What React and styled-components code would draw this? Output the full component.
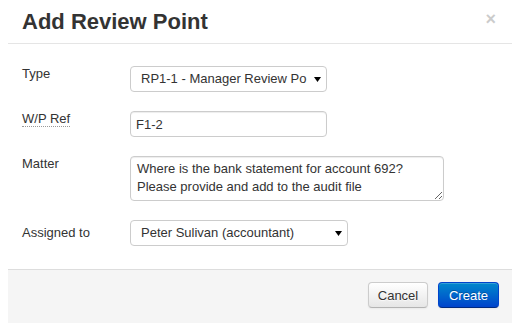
import React from "react";
import styled, { createGlobalStyle } from "styled-components";

const Global = createGlobalStyle`
  html, body { margin: 0; padding: 0; background: #fff; }
  body { font-family: "Liberation Sans", Arial, sans-serif; font-size: 13px; color: #333; }
`;

const Modal = styled.div`
  margin-left: 8px;
  width: 504px;
  height: 323px;
  background: #fff;
  display: flex;
  flex-direction: column;
`;

const Header = styled.div`
  height: 43px;
  border-bottom: 1px solid #e5e5e5;
  display: flex;
  align-items: center;
  justify-content: space-between;
  padding: 0 14px;
`;

const Title = styled.h3`
  margin: 0;
  font-size: 22px;
  font-weight: bold;
  color: #333;
  line-height: 26px;
`;

const Close = styled.span`
  font-size: 18px;
  font-weight: bold;
  color: #000;
  opacity: 0.2;
  line-height: 18px;
  margin-top: -5px;
  margin-right: 2px;
`;

const Body = styled.div`
  flex: 1;
  padding: 22px 14px 0 14px;
  display: flex;
  flex-direction: column;
  gap: 19px;
`;

const Row = styled.div`
  display: flex;
  align-items: flex-start;
`;

const Label = styled.label`
  width: 108px;
  flex: none;
  line-height: 16px;
  padding-top: ${(p) => p.$top || 0}px;
  color: #333;
`;

const Abbr = styled.abbr`
  text-decoration: none;
  border-bottom: 1px dotted #999;
  cursor: help;
`;

const SelectBox = styled.div`
  box-sizing: border-box;
  width: ${(p) => p.$w}px;
  height: 26px;
  border: 1px solid #ccc;
  border-radius: 4px;
  background: #fff;
  display: flex;
  align-items: center;
  padding: 0 5px 0 10px;
  gap: 6px;
`;

const SelectText = styled.span`
  flex: 1;
  min-width: 0;
  white-space: nowrap;
  overflow: hidden;
  line-height: 20px;
  color: #333;
`;

const Input = styled.input`
  box-sizing: border-box;
  width: 197px;
  height: 26px;
  border: 1px solid #ccc;
  border-radius: 4px;
  padding: 0 5px;
  font: inherit;
  font-size: 13px;
  color: #333;
  box-shadow: inset 0 1px 1px rgba(0, 0, 0, 0.075);
  outline: none;
`;

const TextArea = styled.textarea`
  box-sizing: border-box;
  width: 314px;
  height: 45px;
  border: 1px solid #ccc;
  border-radius: 4px;
  padding: 3px 6px;
  font: inherit;
  font-size: 13px;
  line-height: 18px;
  color: #333;
  resize: both;
  overflow: hidden;
  box-shadow: inset 0 1px 1px rgba(0, 0, 0, 0.075);
  outline: none;
`;

const Footer = styled.div`
  height: 54px;
  box-sizing: border-box;
  border-top: 1px solid #ddd;
  background: #f5f5f5;
  display: flex;
  justify-content: flex-end;
  align-items: flex-start;
  padding: 12px 13px 0 0;
  gap: 10px;
`;

const Button = styled.button`
  box-sizing: border-box;
  width: ${(p) => p.$w}px;
  height: 26px;
  padding: 0;
  text-align: center;
  font: inherit;
  font-size: 13px;
  border-radius: 4px;
  cursor: pointer;
  border: 1px solid ${(p) => (p.$primary ? "#0044cc" : "#ccc")};
  border-bottom-color: ${(p) => (p.$primary ? "#002a80" : "#b3b3b3")};
  color: ${(p) => (p.$primary ? "#fff" : "#333")};
  background: ${(p) =>
    p.$primary
      ? "linear-gradient(to bottom, #0088cc, #0044cc)"
      : "linear-gradient(to bottom, #ffffff, #e6e6e6)"};
  box-shadow: inset 0 1px 0 rgba(255, 255, 255, 0.2), 0 1px 2px rgba(0, 0, 0, 0.05);
  text-shadow: ${(p) => (p.$primary ? "0 -1px 0 rgba(0,0,0,0.25)" : "0 1px 1px rgba(255,255,255,0.75)")};
`;

const Caret = () => (
  <svg width="7" height="7" viewBox="0 0 7 7">
    <path d="M0 1 L7 1 L3.5 6 Z" fill="#000" />
  </svg>
);

export default function App() {
  return (
    <>
      <Global />
      <Modal>
        <Header>
          <Title>Add Review Point</Title>
          <Close>×</Close>
        </Header>
        <Body>
          <Row>
            <Label>Type</Label>
            <SelectBox $w={197}>
              <SelectText>RP1-1 - Manager Review Po</SelectText>
              <Caret />
            </SelectBox>
          </Row>
          <Row>
            <Label>
              <Abbr title="Working Paper Reference">W/P Ref</Abbr>
            </Label>
            <Input defaultValue="F1-2" />
          </Row>
          <Row>
            <Label>Matter</Label>
            <TextArea
              defaultValue={"Where is the bank statement for account 692?\nPlease provide and add to the audit file"}
            />
          </Row>
          <Row>
            <Label $top={5}>Assigned to</Label>
            <SelectBox $w={218}>
              <SelectText>Peter Sulivan (accountant)</SelectText>
              <Caret />
            </SelectBox>
          </Row>
        </Body>
        <Footer>
          <Button $w={60}>Cancel</Button>
          <Button $w={61} $primary>Create</Button>
        </Footer>
      </Modal>
    </>
  );
}
